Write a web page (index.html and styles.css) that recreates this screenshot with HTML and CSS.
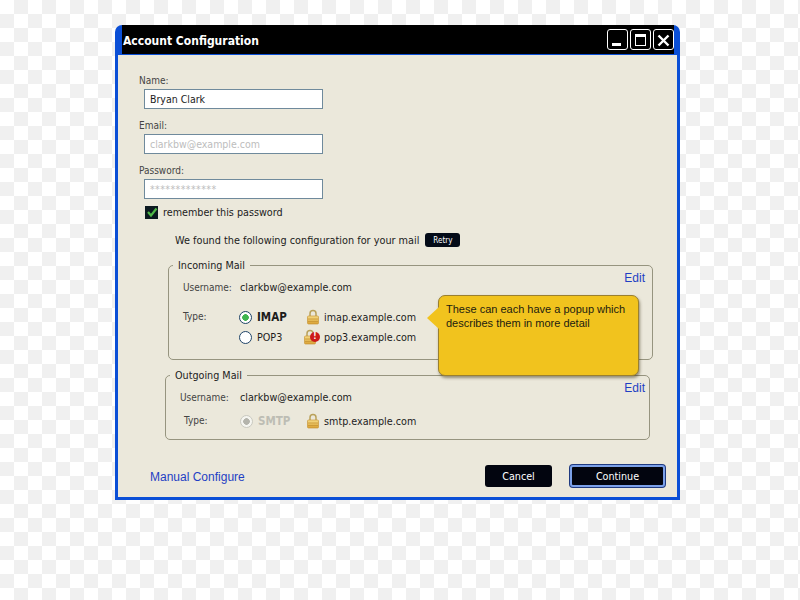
FILE: index.html
```html
<!DOCTYPE html>
<html lang="en">
<head>
  <meta charset="UTF-8" />
  <title>Account Configuration</title>
  <link rel="stylesheet" href="styles.css">
</head>
<body>
  <div class="window">
    <header class="titlebar">
      <h1>Account Configuration</h1>
      <div class="window-controls">
        <button class="win-btn">
          <svg width="19" height="19" viewBox="0 0 19 19"><rect x="4" y="13" width="9" height="3" fill="#fff"/></svg>
        </button>
        <button class="win-btn">
          <svg width="19" height="19" viewBox="0 0 19 19"><rect x="4.500" y="4.500" width="10" height="11" fill="none" stroke="#fff" stroke-width="1"/><rect x="4" y="4" width="11" height="3" fill="#fff"/></svg>
        </button>
        <button class="win-btn">
          <svg width="19" height="19" viewBox="0 0 19 19"><path d="M4.500 5.500 L14.500 15.500 M14.500 5.500 L4.500 15.500" stroke="#fff" stroke-width="2.400"/></svg>
        </button>
      </div>
    </header>

    <div class="content">
      <div class="field-label">Name:</div>
      <div class="text-input">Bryan Clark</div>
      <div class="field-label">Email:</div>
      <div class="text-input placeholder">clarkbw@example.com</div>
      <div class="field-label">Password:</div>
      <div class="text-input placeholder stars">*************</div>

      <div class="remember">
        <span class="checkbox">
          <svg width="12" height="12" viewBox="0 0 12 12"><path d="M2 6 L5 9.500 L10.500 2.500" fill="none" stroke="#4fb848" stroke-width="2.200"/></svg>
        </span>
        remember this password
      </div>

      <div class="found">
        We found the following configuration for your mail
        <button class="retry">Retry</button>
      </div>

      <fieldset class="group incoming">
        <legend>Incoming Mail</legend>
        <a class="edit" href="#">Edit</a>
        <div class="row user-row">
          <span class="key">Username:</span>
          <span>clarkbw@example.com</span>
        </div>
        <div class="row type-row">
          <span class="key">Type:</span>
          <span class="radio on"></span>
          <span class="proto bold">IMAP</span>
          <svg class="lock" width="14" height="16" viewBox="0 0 14 16"><use href="#lock"/></svg>
          <span>imap.example.com</span>
        </div>
        <div class="row type-row second">
          <span class="key"></span>
          <span class="radio"></span>
          <span class="proto">POP3</span>
          <span class="lock-wrap">
            <svg class="lock" width="14" height="16" viewBox="0 0 14 16"><use href="#lock"/></svg>
            <span class="alert">!</span>
          </span>
          <span>pop3.example.com</span>
        </div>
      </fieldset>

      <fieldset class="group outgoing">
        <legend>Outgoing Mail</legend>
        <a class="edit" href="#">Edit</a>
        <div class="row user-row">
          <span class="key">Username:</span>
          <span>clarkbw@example.com</span>
        </div>
        <div class="row type-row">
          <span class="key narrow">Type:</span>
          <span class="radio off"></span>
          <span class="proto bold muted">SMTP</span>
          <svg class="lock" width="14" height="16" viewBox="0 0 14 16"><use href="#lock"/></svg>
          <span>smtp.example.com</span>
        </div>
      </fieldset>

      <div class="popup">
        <span class="popup-arrow"></span>
        These can each have a popup which describes them in more detail
      </div>

      <div class="footer">
        <a class="manual" href="#">Manual Configure</a>
        <div class="footer-buttons">
          <button class="btn">Cancel</button>
          <button class="btn primary">Continue</button>
        </div>
      </div>
    </div>
  </div>

  <svg width="0" height="0" class="defs">
    <defs>
      <linearGradient id="lockfill" x1="0" y1="0" x2="0" y2="1">
        <stop offset="0" stop-color="#f6dc86"/>
        <stop offset="1" stop-color="#d9a032"/>
      </linearGradient>
      <g id="lock">
        <path d="M4 8 V4.500 a3 3 0 0 1 6 0 V8" fill="none" stroke="#b9a15a" stroke-width="1.500"/>
        <rect x="1.500" y="7" width="11" height="8" rx="1" fill="url(#lockfill)" stroke="#c9963a" stroke-width="0.700"/>
        <path d="M2 10 H12 M2 12.500 H12" stroke="#c08c2c" stroke-width="0.600"/>
      </g>
    </defs>
  </svg>
</body>
</html>
```

FILE: styles.css
```css
* {
  box-sizing: border-box;
}
html {
  background: conic-gradient(#fff 25%, #f0f0f0 0 50%, #fff 0 75%, #f0f0f0 0) 14px 0 / 28px 28px;
}
body {
  margin: 0;
  width: 800px;
  height: 600px;
  overflow: hidden;
  padding: 25px 0 0 115px;
  font-family: "DejaVu Sans Condensed", "DejaVu Sans", sans-serif;
  font-stretch: condensed;
  font-size: 10px;
  color: #1c1c1c;
}
.defs {
  position: absolute;
}
.window {
  width: 565px;
  height: 475px;
  background: #0b4fd6;
  border-radius: 7px 7px 0 0;
  padding: 0 3px 3px;
  display: flex;
  flex-direction: column;
}
.titlebar {
  height: 29px;
  flex: none;
  background: #000;
  margin: 0 3px 1px 4px;
  display: flex;
  justify-content: space-between;
  align-items: center;
  padding: 0 0 0 1px;
}
.titlebar h1 {
  margin: 2px 0 0;
  font-size: 12px;
  font-weight: 700;
  color: #fff;
}
.window-controls {
  display: flex;
  gap: 2px;
}
.win-btn {
  width: 21px;
  height: 21px;
  padding: 0;
  background: #000;
  border: 1px solid #fff;
  border-radius: 3px;
}
.win-btn svg {
  display: block;
}
.content {
  flex: 1;
  position: relative;
  background: #ebe8db;
  padding: 16px 0 0 21px;
}
.field-label {
  height: 18px;
  line-height: 19px;
  color: #444;
}
.text-input {
  width: 179px;
  height: 20px;
  margin: 0 0 7px 5px;
  padding-left: 5px;
  line-height: 19px;
  font-size: 10.500px;
  background: #fff;
  border: 1px solid #6f8a9c;
}
.placeholder {
  color: #bdbdbd;
}
.stars {
  letter-spacing: 0.400px;
}
.remember {
  display: flex;
  align-items: center;
  gap: 5px;
  margin: -2px 0 0 6px;
  height: 16px;
  font-size: 10.700px;
}
.checkbox {
  width: 13px;
  height: 13px;
  background: #0c1a20;
  display: flex;
  align-items: center;
  justify-content: center;
}
.found {
  display: flex;
  align-items: center;
  gap: 6px;
  margin: 13px 0 0 36px;
  height: 14px;
  font-size: 10.800px;
}
.retry {
  width: 35px;
  height: 14px;
  padding: 0;
  font-family: inherit;
  font-stretch: condensed;
  font-size: 8px;
  color: #fff;
  background: #040b18;
  border: none;
  border-radius: 3px;
}
.group {
  margin: 0;
  padding: 0;
  position: relative;
  border: 1px solid #96947f;
  border-radius: 5px;
}
.group legend {
  font-size: 10.700px;
  padding: 2px 5px 0;
  margin-left: 4px;
  line-height: 14px;
}
.incoming {
  width: 485px;
  height: 103px;
  margin: 10px 0 0 29px;
}
.outgoing {
  width: 485px;
  height: 73px;
  margin: 7px 0 0 26px;
}
.edit {
  position: absolute;
  top: -2px;
  font-family: "Liberation Sans", sans-serif;
  font-size: 12px;
  color: #1f3fc4;
  text-decoration: none;
}
.incoming .edit {
  right: 7px;
}
.outgoing .edit {
  right: 4px;
}
.row {
  display: flex;
  align-items: center;
  font-size: 10.700px;
}
.key {
  font-size: 10px;
  color: #444;
  width: 57px;
  flex: none;
  margin-left: 14px;
}
.type-row .key {
  width: 56px;
  margin-bottom: 2px;
}
.outgoing .user-row .key {
  width: 60px;
}
.outgoing .key.narrow {
  width: 56px;
  margin-left: 18px;
}
.user-row {
  height: 16px;
  margin-top: 6px;
}
.type-row {
  height: 18px;
  margin-top: 13px;
}
.type-row.second {
  margin-top: 2px;
}
.outgoing .type-row {
  margin-top: 7px;
}
.radio {
  width: 13px;
  height: 13px;
  flex: none;
  border: 1.500px solid #1f4468;
  border-radius: 50%;
  background: #fff;
  margin-right: 5px;
}
.radio.on {
  background: radial-gradient(circle, #3fb54f 0 3px, #fff 3.600px);
}
.radio.off {
  border-color: #c9c9c0;
  background: radial-gradient(circle, #b4b4ac 0 3px, #f5f5f0 3.600px);
}
.proto {
  width: 49px;
  flex: none;
}
.outgoing .proto {
  width: 48px;
}
.bold {
  font-weight: 700;
  font-size: 11.500px;
}
.muted {
  color: #bdbdb4;
}
.lock {
  flex: none;
  margin-right: 4px;
}
.lock-wrap {
  position: relative;
  display: flex;
  margin-left: -3px;
  margin-right: 3px;
}
.alert {
  position: absolute;
  left: 7px;
  top: 3px;
  width: 10px;
  height: 10px;
  border-radius: 50%;
  background: #cc1a1a;
  color: #fff;
  font-size: 8px;
  font-weight: 700;
  line-height: 10px;
  text-align: center;
}
.popup {
  position: absolute;
  left: 320px;
  top: 240px;
  width: 201px;
  height: 81px;
  padding: 6px 7px;
  background: #f1c31e;
  border: 1px solid #9a8030;
  border-radius: 7px;
  box-shadow: 1px 2px 3px rgba(60, 50, 20, 0.5);
  font-family: "Liberation Sans", sans-serif;
  font-size: 11px;
  line-height: 14px;
  color: #1c1c10;
}
.popup-arrow {
  position: absolute;
  left: -12px;
  top: 11px;
  width: 0;
  height: 0;
  border: 11px solid transparent;
  border-left: none;
  border-right: 12px solid #f1c31e;
}
.footer {
  position: absolute;
  left: 32px;
  right: 12px;
  bottom: 10px;
  display: flex;
  justify-content: space-between;
  align-items: center;
}
.manual {
  margin-top: 2px;
  font-family: "Liberation Sans", sans-serif;
  font-size: 12px;
  color: #1f3fc4;
  text-decoration: none;
}
.footer-buttons {
  display: flex;
  gap: 18px;
}
.btn {
  width: 67px;
  height: 22px;
  padding: 0;
  font-family: inherit;
  font-stretch: condensed;
  font-size: 10.700px;
  color: #fff;
  background: #02050f;
  border: none;
  border-radius: 3px;
}
.btn.primary {
  width: 95px;
  border: 2px solid #7ba0e8;
  box-shadow: 0 0 0 1px #1f3a80;
}
```
